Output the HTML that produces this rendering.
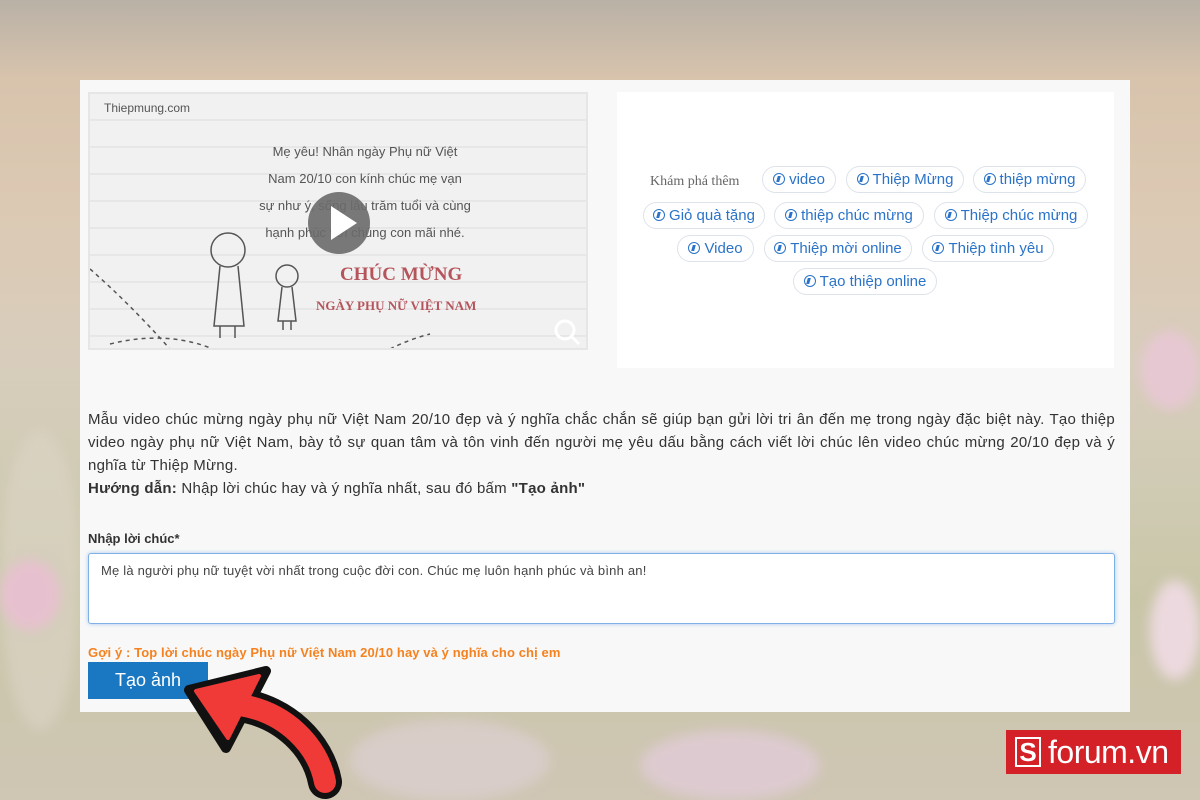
<!DOCTYPE html>
<html><head><meta charset="utf-8"><style>
*{box-sizing:border-box;margin:0;padding:0}
body{width:1200px;height:800px;overflow:hidden;position:relative;font-family:"Liberation Sans",Arial,sans-serif;
background:linear-gradient(180deg,#b9b1a6 0%,#d8c4ad 10%,#dcc9b3 25%,#d8cdbc 45%,#d0cbb4 60%,#c9c6a8 75%,#cfc6b4 100%);}
.fl{position:absolute;border-radius:50%;filter:blur(6px)}
.panel{position:absolute;left:80px;top:80px;width:1050px;height:632px;background:#f8f8f8}
.video{position:absolute;left:8px;top:12px;width:500px;height:258px;border:2px solid #e6e6e6;background:#f1f1f1;overflow:hidden;
background-image:repeating-linear-gradient(180deg,#f1f1f1 0,#f1f1f1 25px,#dcdcdc 26px,#f1f1f1 27px)}
.side{position:absolute;left:537px;top:12px;width:497px;height:276px;background:#fff}
.chip{position:absolute;height:27px;border:1px solid #dde3ea;border-radius:14px;color:#2a73c9;font-size:15px;line-height:25px;text-align:center;background:#fff;white-space:nowrap}
.chip i{display:inline-block;width:12px;height:12px;border:1.6px solid #2a73c9;border-radius:50%;vertical-align:-1px;margin-right:4px;font-style:normal;position:relative}
.chip i:after{content:"";position:absolute;left:2.5px;top:1.5px;width:3px;height:6px;background:#2a73c9;transform:skewX(-15deg)}
p.desc{position:absolute;left:8px;top:328px;width:1027px;font-size:15px;line-height:23px;color:#333;text-align:justify;letter-spacing:.25px}
</style></head><body>
<div class="fl" style="left:0;top:430px;width:80px;height:300px;background:#ddd5c8;opacity:.6"></div>
<div class="fl" style="left:0;top:560px;width:60px;height:70px;background:#e7c0cf"></div>
<div class="fl" style="left:1140px;top:330px;width:60px;height:80px;background:#e6c8d2"></div>
<div class="fl" style="left:1150px;top:580px;width:50px;height:100px;background:#ecd9df"></div>
<div class="fl" style="left:350px;top:720px;width:200px;height:80px;background:#dccfcf;opacity:.8"></div>
<div class="fl" style="left:640px;top:730px;width:180px;height:70px;background:#e1ccd8;opacity:.8"></div>
<div class="panel">
 <div class="video">
  <div style="position:absolute;left:14px;top:7px;font-size:12px;color:#555">Thiepmung.com</div>
  <div style="position:absolute;left:150px;top:44px;width:250px;text-align:center;font-size:13px;line-height:27px;color:#555">Mẹ yêu! Nhân ngày Phụ nữ Việt<br>Nam 20/10 con kính chúc mẹ vạn<br>sự như ý, sống lâu trăm tuổi và cùng<br>hạnh phúc với chúng con mãi nhé.</div>
  <div style="position:absolute;left:218px;top:98px;width:62px;height:62px;border-radius:50%;background:#6a6a6a;opacity:.9"></div>
  <div style="position:absolute;left:241px;top:112px;border-left:26px solid #fff;border-top:17px solid transparent;border-bottom:17px solid transparent"></div>
  <div style="position:absolute;left:250px;top:170px;font-family:'Liberation Serif',serif;font-weight:bold;font-size:19px;color:#b5545b">CHÚC MỪNG</div>
  <div style="position:absolute;left:226px;top:204px;font-family:'Liberation Serif',serif;font-weight:bold;font-size:13px;color:#b5545b">NGÀY PHỤ NỮ VIỆT NAM</div>
  <svg style="position:absolute;left:0;top:0" width="500" height="258" fill="none" stroke="#555" stroke-width="1.5">
   <circle cx="138" cy="156" r="17"/><path d="M130 172 L124 232 L154 232 L148 172"/><path d="M130 232v12M145 232v12"/>
   <circle cx="197" cy="182" r="11"/><path d="M192 193 L188 227 L206 227 L202 193M193 227v9M201 227v9"/>
   <path d="M0 175 Q40 210 80 255" stroke-dasharray="4 4"/><path d="M20 250 Q80 235 130 258" stroke-dasharray="4 4"/><path d="M300 255 Q320 245 340 240" stroke-dasharray="4 4"/>
   <circle cx="475" cy="236" r="9" stroke="#fff" stroke-width="3"/><path d="M482 243l7 7" stroke="#fff" stroke-width="3"/>
  </svg>
 </div>
 <div class="side">
  <div style="position:absolute;left:33px;top:82px;font-family:'Liberation Serif',serif;font-size:14px;color:#666">Khám phá thêm</div>
 </div>
 <div class="chip" style="left:682px;top:86px;width:74px"><i></i>video</div>
 <div class="chip" style="left:766px;top:86px;width:118px"><i></i>Thiệp Mừng</div>
 <div class="chip" style="left:893px;top:86px;width:113px"><i></i>thiệp mừng</div>
 <div class="chip" style="left:563px;top:122px;width:122px"><i></i>Giỏ quà tặng</div>
 <div class="chip" style="left:694px;top:122px;width:150px"><i></i>thiệp chúc mừng</div>
 <div class="chip" style="left:854px;top:122px;width:154px"><i></i>Thiệp chúc mừng</div>
 <div class="chip" style="left:597px;top:155px;width:77px"><i></i>Video</div>
 <div class="chip" style="left:684px;top:155px;width:148px"><i></i>Thiệp mời online</div>
 <div class="chip" style="left:842px;top:155px;width:132px"><i></i>Thiệp tình yêu</div>
 <div class="chip" style="left:713px;top:188px;width:144px"><i></i>Tạo thiệp online</div>
 <p class="desc">Mẫu video chúc mừng ngày phụ nữ Việt Nam 20/10 đẹp và ý nghĩa chắc chắn sẽ giúp bạn gửi lời tri ân đến mẹ trong ngày đặc biệt này. Tạo thiệp video ngày phụ nữ Việt Nam, bày tỏ sự quan tâm và tôn vinh đến người mẹ yêu dấu bằng cách viết lời chúc lên video chúc mừng 20/10 đẹp và ý nghĩa từ Thiệp Mừng.<br><b>Hướng dẫn:</b> Nhập lời chúc hay và ý nghĩa nhất, sau đó bấm <b>"Tạo ảnh"</b></p>
 <div style="position:absolute;left:8px;top:451px;font-size:13px;font-weight:bold;color:#333">Nhập lời chúc*</div>
 <div style="position:absolute;left:8px;top:473px;width:1027px;height:71px;background:#fff;border:1px solid #7fb0e6;box-shadow:0 0 4px #a9c9ef;border-radius:3px;padding:9px 12px;font-size:13px;color:#444;letter-spacing:.2px">Mẹ là người phụ nữ tuyệt vời nhất trong cuộc đời con. Chúc mẹ luôn hạnh phúc và bình an!</div>
 <div style="position:absolute;left:8px;top:565px;font-size:13px;font-weight:bold;color:#f5821f;letter-spacing:.1px">Gợi ý : Top lời chúc ngày Phụ nữ Việt Nam 20/10 hay và ý nghĩa cho chị em</div>
 <div style="position:absolute;left:8px;top:582px;width:120px;height:37px;background:#1a78c2;color:#fff;font-size:18px;line-height:37px;text-align:center">Tạo ảnh</div>
</div>
<svg style="position:absolute;left:0;top:0" width="1200" height="800">
 <path d="M240 705 C285 712 318 745 325 782" fill="none" stroke="#111" stroke-width="34" stroke-linecap="round"/>
 <polygon points="189,690 266,671 226,748" fill="#111" stroke="#111" stroke-width="10" stroke-linejoin="round"/>
 <path d="M240 705 C285 712 318 745 325 782" fill="none" stroke="#f03a37" stroke-width="22" stroke-linecap="round"/>
 <polygon points="196,691 259,676 228,738" fill="#f03a37" stroke="#f03a37" stroke-width="4" stroke-linejoin="round"/>
</svg>
<div style="position:absolute;left:1006px;top:730px;width:175px;height:44px;background:#d42027;color:#fff;font-size:32px;line-height:44px;padding-left:42px;letter-spacing:-.5px">forum.vn</div>
<div style="position:absolute;left:1015px;top:737px;width:26px;height:30px;border:2px solid #fff;color:#fff;font-size:26px;font-weight:bold;line-height:26px;text-align:center">S</div>
</body></html>
